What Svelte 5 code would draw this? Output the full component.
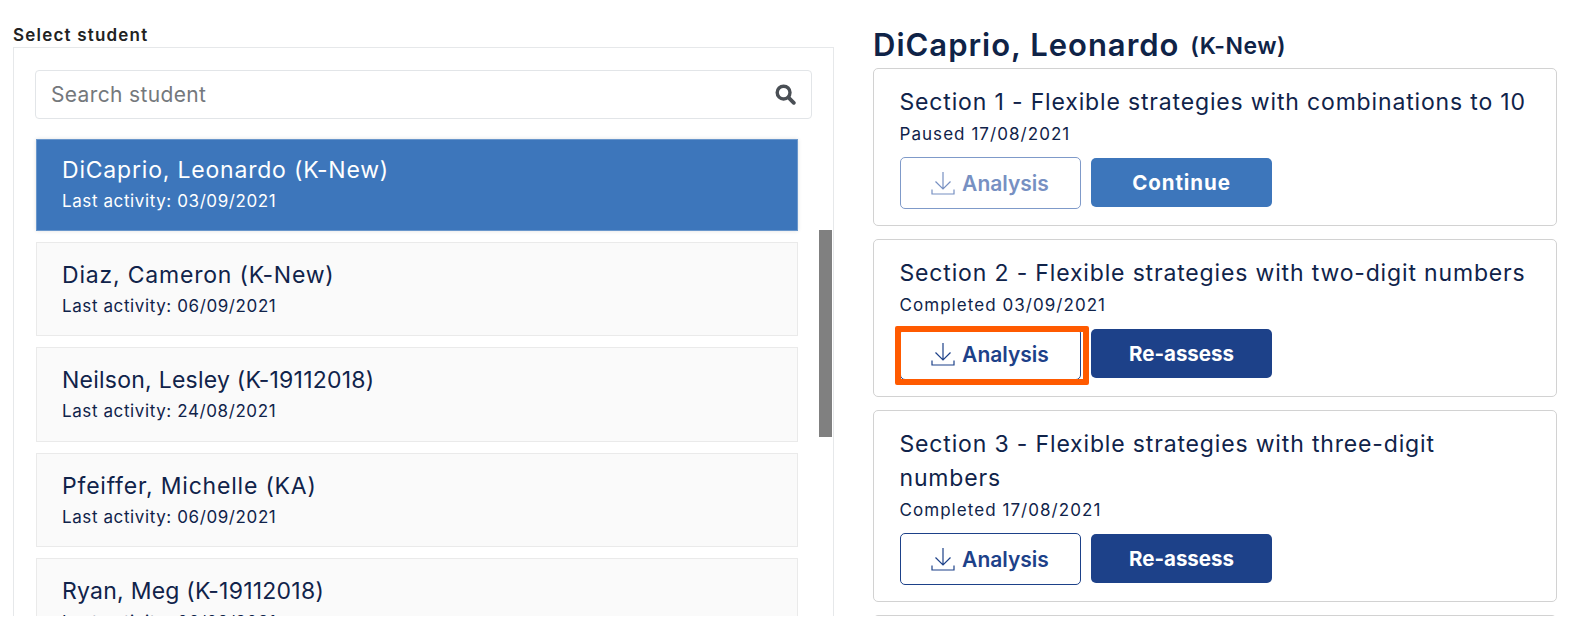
<script lang="ts">
	const students = [
		{ name: 'DiCaprio, Leonardo (K-New)', last: '03/09/2021', selected: true },
		{ name: 'Diaz, Cameron (K-New)', last: '06/09/2021' },
		{ name: 'Neilson, Lesley (K-19112018)', last: '24/08/2021', tight: true },
		{ name: 'Pfeiffer, Michelle (KA)', last: '06/09/2021' },
		{ name: 'Ryan, Meg (K-19112018)', last: '06/09/2021', tight: true }
	];

	const sections = [
		{ title: 'Section 1 - Flexible strategies with combinations to 10', status: 'Paused 17/08/2021', action: 'Continue', paused: true },
		{ title: 'Section 2 - Flexible strategies with two-digit numbers', status: 'Completed 03/09/2021', action: 'Re-assess', marked: true },
		{ title: 'Section 3 - Flexible strategies with three-digit numbers', status: 'Completed 17/08/2021', action: 'Re-assess' }
	];
</script>

<div class="page">
	<section class="left">
		<div class="label">Select student</div>
		<div class="panel">
			<div class="search">
				<span class="placeholder">Search student</span>
				<svg class="search-icon" width="21" height="21" viewBox="0 0 21 21" fill="none" stroke="#4a4f55" stroke-linecap="round">
					<circle cx="8.6" cy="8.6" r="6.4" stroke-width="3.4" />
					<line x1="13.6" y1="13.6" x2="18.8" y2="18.8" stroke-width="3.8" />
				</svg>
			</div>
			<div class="list">
				{#each students as s}
					<div class="student" class:selected={s.selected}>
						<div class="name" class:tight={s.tight}>{s.name}</div>
						<div class="last">Last activity: {s.last}</div>
					</div>
				{/each}
				<div class="thumb"></div>
			</div>
		</div>
	</section>

	<section class="right">
		<h1>DiCaprio, Leonardo <small>(K-New)</small></h1>
		{#each sections as sec}
			<div class="card">
				<div class="title">{sec.title}</div>
				<div class="status">{sec.status}</div>
				<div class="actions">
					<button class="analysis" class:paused={sec.paused}>
						<svg width="24" height="24" viewBox="0 0 24 24" fill="none" stroke="currentColor" stroke-width="1.2">
							<path d="M12 1v17M4.500 10.500 12 18l7.500-7.500M1 18.500V23h22v-4.500" />
						</svg>
						<span class="analysis-text">Analysis</span>
					</button>
					<button class="primary" class:paused={sec.paused}>{sec.action}</button>
					{#if sec.marked}
						<div class="marker"></div>
					{/if}
				</div>
			</div>
		{/each}
		<div class="card next"></div>
	</section>
</div>

<style>
	:global(body) {
		background: #fff;
	}

	.page {
		display: grid;
		grid-template-columns: 821px 684px;
		column-gap: 39px;
		height: 616px;
		padding-left: 13px;
		overflow: hidden;
		box-sizing: border-box;
		font-family: Inter, "Open Sans", sans-serif;
		color: #10234a;
	}

	.label {
		margin-top: 26px;
		height: 21px;
		font-size: 17px;
		line-height: 19px;
		letter-spacing: 1.2px;
		font-weight: 600;
		color: #222;
	}

	.panel {
		border: 1px solid #e6e8ea;
		padding: 22px 35px 0 22px;
		height: 600px;
		box-sizing: border-box;
	}

	.search {
		display: flex;
		align-items: center;
		justify-content: space-between;
		height: 49px;
		box-sizing: border-box;
		padding: 0 15px;
		border: 1px solid #e2e5e8;
		border-radius: 4px;
		margin-right: -14px;
		margin-left: -1px;
	}

	.placeholder {
		font-size: 21px;
		letter-spacing: 0.35px;
		color: #74787c;
	}

	.list {
		position: relative;
		display: flex;
		flex-direction: column;
		gap: 11px;
		margin-top: 20px;
	}

	.student {
		height: 94.4px;
		box-sizing: border-box;
		padding: 18px 25px 0;
		background: #fafafa;
		border: 1px solid #eaeaea;
	}

	.student.selected {
		background: #3d76bb;
		border-color: #6a97cc;
		color: #fff;
		height: 92px;
		padding-top: 16px;
		box-shadow: 0 0 4px rgba(0, 0, 0, 0.12);
	}

	.name {
		font-size: 23px;
		letter-spacing: 0.8px;
		line-height: 28px;
	}

	.name.tight {
		letter-spacing: 0.24px;
	}

	.last {
		margin-top: 7px;
		font-size: 17px;
		letter-spacing: 0.6px;
		line-height: 20px;
	}

	.thumb {
		position: absolute;
		top: 91px;
		right: -34px;
		width: 13px;
		height: 207px;
		background: #808080;
	}

	h1 {
		margin: 25px 0 0;
		height: 43px;
		font-size: 31px;
		letter-spacing: 1px;
		line-height: 40px;
		font-weight: 600;
		color: #0f2347;
	}

	h1 small {
		font-size: 23px;
		letter-spacing: 0.5px;
		margin-left: 2px;
		vertical-align: 2px;
	}

	.card {
		border: 1px solid #d2d2d2;
		border-radius: 5px;
		padding: 16px 20px 16px 25.5px;
		margin-bottom: 13px;
	}

	.card.next {
		height: 60px;
	}

	.title {
		font-size: 23px;
		letter-spacing: 0.84px;
		line-height: 34px;
	}

	.status {
		font-size: 17px;
		letter-spacing: 1.05px;
		line-height: 20px;
		margin-top: 4.5px;
	}

	.actions {
		position: relative;
		display: flex;
		align-items: center;
		gap: 10.5px;
		margin-top: 13px;
	}

	button {
		font-family: inherit;
		font-weight: 600;
		border-radius: 5px;
		box-sizing: border-box;
		width: 181px;
		cursor: pointer;
	}

	.analysis {
		display: flex;
		align-items: center;
		justify-content: center;
		gap: 7px;
		height: 52.5px;
		font-size: 21px;
		background: #fff;
		color: #1d4189;
		border: 1px solid #1d4189;
	}

	.analysis-text {
		margin-top: 2px;
	}

	.analysis.paused {
		color: #7790c2;
		border-color: #7f9ac9;
	}

	.primary {
		height: 49px;
		font-size: 20.5px;
		font-weight: 700;
		background: #1d4189;
		color: #fff;
		border: none;
	}

	.primary.paused {
		background: #3d76bb;
		letter-spacing: 0.9px;
	}

	.marker {
		position: absolute;
		left: -5px;
		top: -2px;
		width: 182px;
		height: 47px;
		border: 6px solid #ff5a00;
		border-radius: 2px;
	}
</style>
